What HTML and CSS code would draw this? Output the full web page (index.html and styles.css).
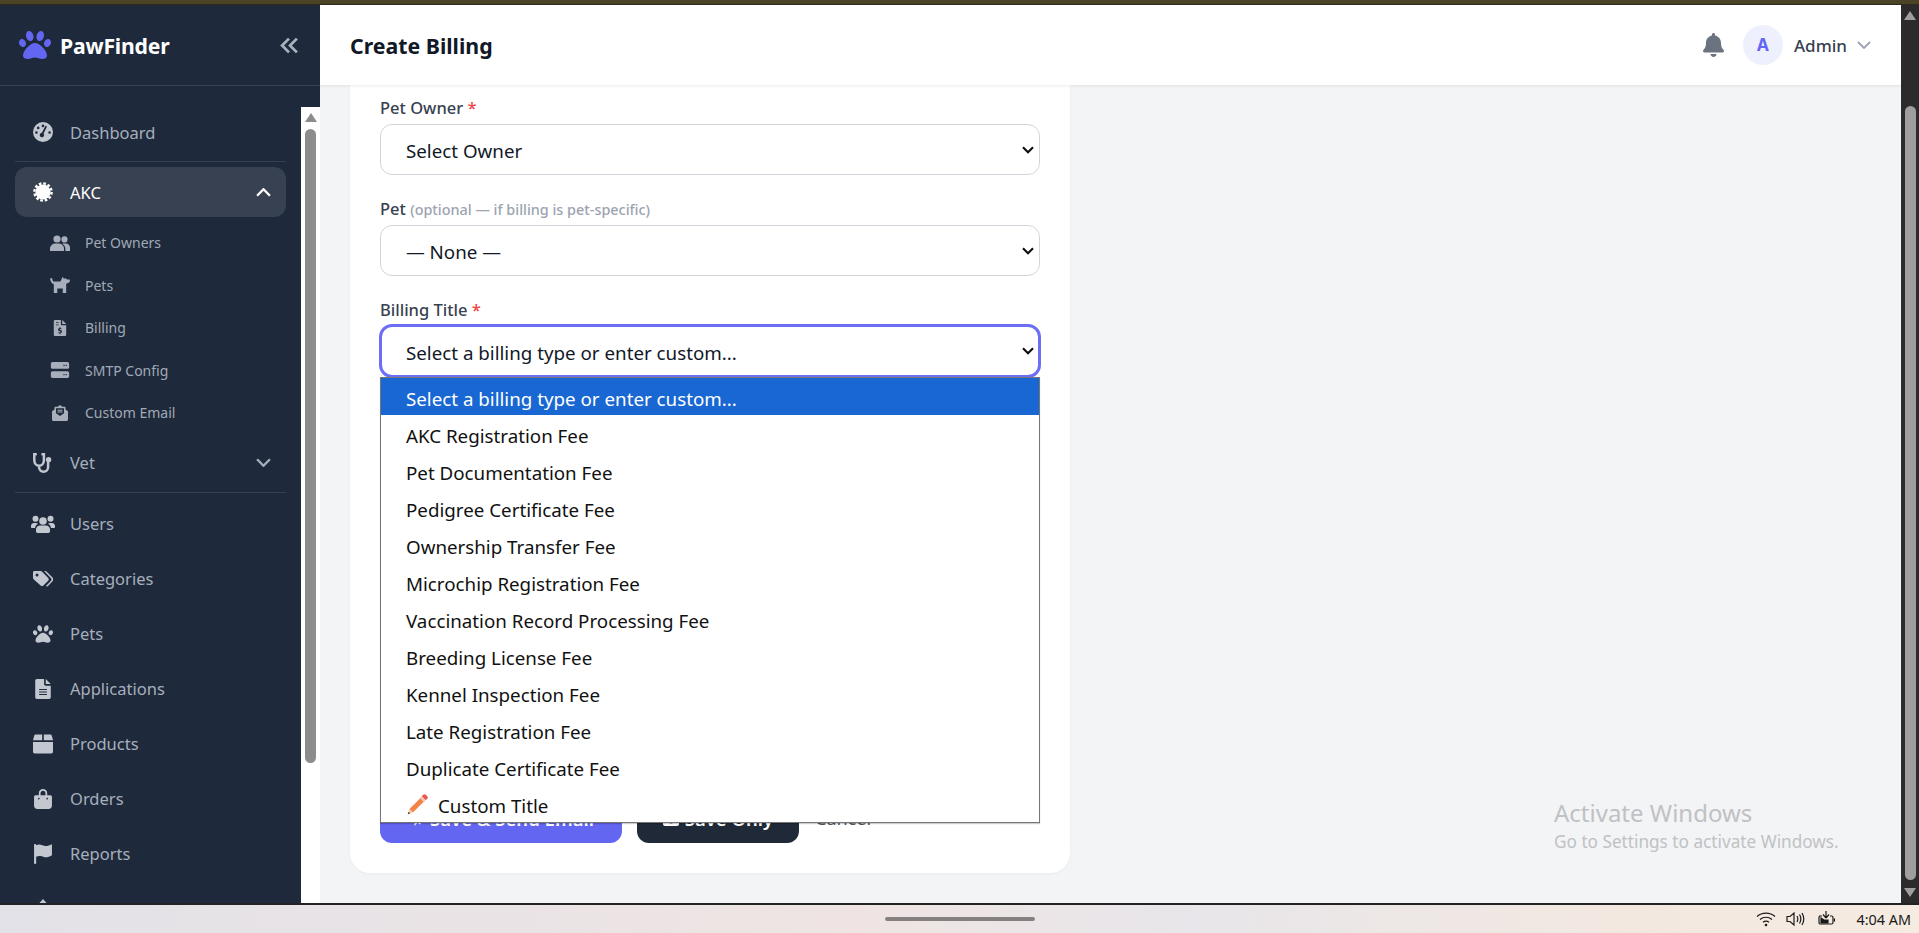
FILE: index.html
```html
<!DOCTYPE html>
<html lang="en">
<head>
    <meta charset="UTF-8">
    <meta name="viewport" content="width=device-width, initial-scale=1.0">
    <title>Create Billing - PawFinder</title>
    <link rel="stylesheet" href="styles.css">
</head>
<body>
    <svg class="icon-defs" aria-hidden="true">
        <symbol id="i-paw" viewBox="0 0 512 512"><path d="M256 224c-79.41 0-192 122.76-192 200.25 0 34.9 26.81 55.75 71.74 55.75 48.84 0 81.09-25.08 120.26-25.08 39.51 0 71.85 25.08 120.26 25.08 44.93 0 71.74-20.85 71.74-55.75C448 346.76 335.41 224 256 224zm-147.28-12.61c-10.4-34.65-42.44-57.09-71.56-50.13-29.12 6.96-44.29 40.69-33.89 75.34 10.4 34.65 42.44 57.09 71.56 50.13 29.12-6.96 44.29-40.69 33.89-75.34zm84.72-20.78c30.94-8.14 46.42-49.94 34.58-93.36s-46.52-72.01-77.46-63.87-46.42 49.94-34.58 93.36c11.84 43.42 46.52 72.01 77.46 63.87zm281.39-29.34c-29.12-6.96-61.15 15.48-71.56 50.13-10.4 34.65 4.77 68.38 33.89 75.34 29.12 6.96 61.15-15.48 71.56-50.13 10.4-34.65-4.77-68.38-33.89-75.34zm-156.27 29.34c30.94 8.14 65.62-20.45 77.46-63.87 11.84-43.42-3.64-85.21-34.58-93.36s-65.62 20.45-77.46 63.87c-11.84 43.42 3.64 85.22 34.58 93.36z"/></symbol>
        <symbol id="i-bell" viewBox="0 0 448 512"><path d="M224 512c35.32 0 63.97-28.65 63.97-64H160.03c0 35.35 28.65 64 63.97 64zm215.39-149.71c-19.32-20.76-55.47-51.99-55.47-154.29 0-77.7-54.48-139.9-127.94-155.16V32c0-17.67-14.32-32-31.98-32s-31.98 14.33-31.98 32v20.84C118.56 68.1 64.08 130.3 64.08 208c0 102.3-36.15 133.53-55.47 154.29-6 6.45-8.66 14.16-8.61 21.71.11 16.4 12.98 32 32.1 32h383.8c19.12 0 32-15.6 32.1-32 .05-7.55-2.61-15.26-8.61-21.71z"/></symbol>
        <symbol id="i-gauge" viewBox="0 0 20 20"><path fill-rule="evenodd" d="M10 0a10 10 0 1 1 0 20a10 10 0 0 1 0-20zM10 2.6a1.3 1.3 0 1 0 0 2.6a1.3 1.3 0 0 0 0-2.6zM5.2 4.6a1.3 1.3 0 1 0 0 2.6a1.3 1.3 0 0 0 0-2.6zM3.4 9.2a1.3 1.3 0 1 0 0 2.6a1.3 1.3 0 0 0 0-2.6zM16.6 9.2a1.3 1.3 0 1 0 0 2.6a1.3 1.3 0 0 0 0-2.6zM14 4.4l-3.4 7.2a2.2 2.2 0 1 1-1.7-.8l3.6-7z"/></symbol>
        <symbol id="i-cert" viewBox="0 0 20 20"><circle cx="10" cy="10" r="7.6"/><circle cx="10" cy="10" r="8.6" fill="none" stroke="currentColor" stroke-width="2.4" stroke-dasharray="2.7 1.8"/></symbol>
        <symbol id="i-friends" viewBox="0 0 20 16"><circle cx="7" cy="4" r="3.6"/><path d="M0 16v-2.2C0 10.8 2.8 8.6 5 8.6h4c2.2 0 5 2.2 5 5.2V16z"/><circle cx="14.5" cy="4.4" r="3.1"/><path d="M12.2 8.8c.6-.3 1.2-.4 1.8-.4h2c2.2 0 4 1.9 4 4.2V16h-4.6v-2.4c0-1.8-1.2-3.6-3.2-4.8z"/></symbol>
        <symbol id="i-dog" viewBox="0 0 20 16"><path d="M0 1.500l1.800-.6L3.200 4.500h7.300L12.400.2c.2-.3.6-.2.7.1l.5 1.200h2.700l.7 1h2.600l.4 1.200c-.3 1.500-1.400 2.400-3 2.500l-.8.8V16h-3.400v-4.500H7.300V16H3.800V7.200C1.800 6.600.4 4.500 0 1.500z"/></symbol>
        <symbol id="i-invoice" viewBox="0 0 14 18"><path fill-rule="evenodd" d="M1.500 0H8v4.500c0 .8.700 1.500 1.500 1.500H14v10.500c0 .8-.7 1.500-1.500 1.500h-11C.7 18 0 17.300 0 16.500v-15C0 .7.700 0 1.500 0zM9.500 0l4.500 4.500H9.500zM2.500 2.500v1h3v-1zM2.500 5v1h3V5zM6.500 8v1.100c-1.100.2-1.700.9-1.700 1.800 0 1 .8 1.500 1.800 1.800.8.200 1.100.4 1.100.8 0 .3-.3.500-.8.500-.5 0-1-.2-1.400-.4l-.5 1c.4.300.9.400 1.500.5V16h1v-1.100c1.100-.2 1.800-.9 1.800-1.900 0-1-.8-1.500-1.800-1.800-.8-.2-1.100-.4-1.100-.7 0-.3.200-.5.700-.5.400 0 .8.100 1.200.3l.4-1c-.4-.2-.8-.3-1.200-.4V8z"/></symbol>
        <symbol id="i-server" viewBox="0 0 16 14"><path fill-rule="evenodd" d="M1.500 0h13c.8 0 1.500.7 1.500 1.500v3c0 .8-.7 1.500-1.500 1.500h-13C.7 6 0 5.300 0 4.500v-3C0 .7.700 0 1.500 0zM11 2.500v1h1v-1zM13 2.500v1h1v-1zM1.500 8h13c.8 0 1.500.7 1.500 1.500v3c0 .8-.7 1.500-1.500 1.500h-13C.7 14 0 13.300 0 12.500v-3C0 8.700.7 8 1.500 8zM11 10.500v1h1v-1zM13 10.500v1h1v-1z"/></symbol>
        <symbol id="i-mail" viewBox="0 0 16 16"><path fill-rule="evenodd" d="M8 0l2.400 1.700h2.100c.6 0 1 .4 1 1v1.700L16 6.300V14.500c0 .8-.7 1.500-1.500 1.500h-13C.7 16 0 15.300 0 14.500V6.300l2.500-1.900V2.700c0-.6.4-1 1-1h2.100zM4 3.200v5l4 2.900 4-2.900v-5zM5.500 4.700h5v1h-5zM5.500 6.500h5v1h-5z"/></symbol>
        <symbol id="i-users" viewBox="0 0 24 18"><circle cx="4.500" cy="3.800" r="3"/><circle cx="19.500" cy="3.800" r="3"/><circle cx="12" cy="6" r="3.800"/><path d="M0 11c0-1.600 1.200-3 3-3h2c.8 0 1.400.2 2 .7-1.700 1-2.800 2.500-3 4.300H1c-.6 0-1-.4-1-1zM24 11c0-1.600-1.200-3-3-3h-2c-.8 0-1.400.2-2 .7 1.700 1 2.800 2.500 3 4.300h3c.6 0 1-.4 1-1zM9 10.500h6c2.200 0 4 1.800 4 3.800v2c0 .9-.8 1.700-1.700 1.700H6.700c-.9 0-1.700-.8-1.700-1.700v-2c0-2 1.800-3.800 4-3.800z"/></symbol>
        <symbol id="i-tags" viewBox="0 0 20 16"><path fill-rule="evenodd" d="M1.500 0h6c.5 0 1 .2 1.400.6l6.300 6.300c.8.800.8 2 0 2.800l-4.800 4.800c-.8.800-2 .8-2.800 0L.6 8.200C.2 7.800 0 7.300 0 6.800V1.500C0 .7.700 0 1.500 0zM4 2.500a1.500 1.500 0 1 0 0 3a1.500 1.500 0 0 0 0-3zM11 0h1.100c.5 0 1 .2 1.400.6l6 6c1 1 1 2.700 0 3.700l-4.700 4.900c-.5.500-1.100.5-1.500 0l-.3-.300 5-5.100c.7-.8.700-1.800 0-2.600z"/></symbol>
        <symbol id="i-file" viewBox="0 0 14 18"><path fill-rule="evenodd" d="M1.500 0H8v4.500c0 .8.700 1.500 1.500 1.500H14v10.500c0 .8-.7 1.500-1.500 1.500h-11C.7 18 0 17.300 0 16.500v-15C0 .7.700 0 1.500 0zM9.500 0l4.500 4.500H9.500zM3.500 9v1h7V9zM3.500 11.200v1h7v-1zM3.500 13.400v1h7v-1z"/></symbol>
        <symbol id="i-box" viewBox="0 0 17 16"><path d="M2.300 0H7.800v4.800H0L1 1C1.200.4 1.700 0 2.300 0zM9.200 0h5.500c.6 0 1.100.4 1.300 1l1 3.800H9.200zM0 6.200h17v8.300c0 .8-.7 1.500-1.500 1.500h-14C.7 16 0 15.300 0 14.500z"/></symbol>
        <symbol id="i-bag" viewBox="0 0 17 19"><path fill-rule="evenodd" d="M8.500 0c2.300 0 4 1.800 4 4v2h3c.8 0 1.500.6 1.500 1.400V16c0 1.700-1.300 3-3 3H3c-1.700 0-3-1.300-3-3V7.400C0 6.600.7 6 1.500 6h3V4c0-2.200 1.700-4 4-4zm0 1.700C7.200 1.700 6.200 2.700 6.200 4v2h4.600V4c0-1.300-1-2.300-2.300-2.300zM4.500 8.300a.8.8 0 1 0 0 1.600a.8.8 0 0 0 0-1.600zM12.500 8.300a.8.8 0 1 0 0 1.600a.8.8 0 0 0 0-1.600z"/></symbol>
        <symbol id="i-flag" viewBox="0 0 17 19"><path d="M0 1c0-.6.500-1 1-1s1 .4 1 1v.3C3.500.6 4.800.3 6.200.6c2.300.5 4 1.500 6.200 1.200 1.500-.2 3-.8 4.600-1.500v10.400c-1.600 1-3.100 1.700-4.800 1.900-2.300.2-4-.8-6.200-1.200-1.300-.2-2.700.1-4 .8V18c0 .6-.5 1-1 1s-1-.4-1-1z"/></symbol>
        <symbol id="i-stetho" viewBox="0 0 20 20"><path d="M2.800 1.300H1.300v6c0 3.200 2.200 5.500 4.800 5.500s4.800-2.300 4.800-5.500v-6H9.400M6.100 12.800v1.500c0 2.500 1.800 4.400 4.500 4.400 2.600 0 4.500-1.900 4.500-4.400V9.500" fill="none" stroke="currentColor" stroke-width="2.500" stroke-linecap="round"/><circle cx="15.600" cy="6.800" r="2.700"/></symbol>
        <symbol id="i-plane" viewBox="0 0 16 16"><path d="M16 0L0 9l4.500 2L13 3.500 6.500 12v4l2.700-3 3.300 1.500z"/></symbol>
        <symbol id="i-save" viewBox="0 0 16 16"><path fill-rule="evenodd" d="M2 0h10l4 4v10c0 1.100-.9 2-2 2H2c-1.100 0-2-.9-2-2V2C0 .9.900 0 2 0zM3 2.500V6h8V2.500zM8 8.500a2.500 2.500 0 1 0 0 5a2.500 2.500 0 0 0 0-5z"/></symbol>
    </svg>

    <div class="top-strip"></div>

    <div class="window">
        <aside class="sidebar">
            <div class="brand">
                <svg class="brand-paw"><use href="#i-paw"/></svg>
                <span class="brand-name">PawFinder</span>
                <svg class="brand-collapse" viewBox="0 0 18 16"><path d="M8.500 1.500L2 8l6.500 6.500M16 1.500L9.500 8l6.500 6.500"/></svg>
            </div>
            <div class="sidebar-body">
                <nav class="nav">
                    <a class="nav-item"><svg class="nav-icon"><use href="#i-gauge"/></svg>Dashboard</a>
                    <div class="nav-sep"></div>
                    <a class="nav-item active">
                        <svg class="nav-icon"><use href="#i-cert"/></svg>AKC
                        <svg class="nav-chevron" viewBox="0 0 14 8"><path d="M1 7l6-6 6 6"/></svg>
                    </a>
                    <div class="sub-list">
                        <a class="sub-item"><svg class="sub-icon"><use href="#i-friends"/></svg>Pet Owners</a>
                        <a class="sub-item"><svg class="sub-icon"><use href="#i-dog"/></svg>Pets</a>
                        <a class="sub-item"><svg class="sub-icon"><use href="#i-invoice"/></svg>Billing</a>
                        <a class="sub-item"><svg class="sub-icon"><use href="#i-server"/></svg>SMTP Config</a>
                        <a class="sub-item"><svg class="sub-icon"><use href="#i-mail"/></svg>Custom Email</a>
                    </div>
                    <a class="nav-item">
                        <svg class="nav-icon"><use href="#i-stetho"/></svg>Vet
                        <svg class="nav-chevron" viewBox="0 0 14 8"><path d="M1 1l6 6 6-6"/></svg>
                    </a>
                    <div class="nav-sep nav-sep-wide"></div>
                    <a class="nav-item"><svg class="nav-icon nav-icon-wide"><use href="#i-users"/></svg>Users</a>
                    <a class="nav-item"><svg class="nav-icon"><use href="#i-tags"/></svg>Categories</a>
                    <a class="nav-item"><svg class="nav-icon"><use href="#i-paw"/></svg>Pets</a>
                    <a class="nav-item"><svg class="nav-icon"><use href="#i-file"/></svg>Applications</a>
                    <a class="nav-item"><svg class="nav-icon"><use href="#i-box"/></svg>Products</a>
                    <a class="nav-item"><svg class="nav-icon"><use href="#i-bag"/></svg>Orders</a>
                    <a class="nav-item"><svg class="nav-icon"><use href="#i-flag"/></svg>Reports</a>
                    <a class="nav-item"><svg class="nav-icon" viewBox="0 0 20 20"><path d="M10 0l8 9H2z"/></svg></a>
                </nav>
                <div class="side-scroll">
                    <span class="arrow-up"></span>
                    <span class="side-thumb"></span>
                </div>
            </div>
        </aside>

        <main class="main">
            <header class="header">
                <h1 class="page-title">Create Billing</h1>
                <svg class="bell"><use href="#i-bell"/></svg>
                <span class="avatar">A</span>
                <span class="user-name">Admin</span>
                <svg class="user-chevron" viewBox="0 0 14 8"><path d="M1 1l6 6 6-6"/></svg>
            </header>
            <div class="content">
                <form class="card">
                    <div class="field">
                        <label class="field-label">Pet Owner <span class="req">*</span></label>
                        <select class="field-select"><option>Select Owner</option></select>
                    </div>
                    <div class="field">
                        <label class="field-label">Pet <small class="hint">(optional — if billing is pet-specific)</small></label>
                        <select class="field-select"><option>— None —</option></select>
                    </div>
                    <div class="field field-open">
                        <label class="field-label">Billing Title <span class="req">*</span></label>
                        <select class="field-select focused"><option>Select a billing type or enter custom...</option></select>
                        <ul class="dropdown">
                            <li class="selected">Select a billing type or enter custom...</li>
                            <li>AKC Registration Fee</li>
                            <li>Pet Documentation Fee</li>
                            <li>Pedigree Certificate Fee</li>
                            <li>Ownership Transfer Fee</li>
                            <li>Microchip Registration Fee</li>
                            <li>Vaccination Record Processing Fee</li>
                            <li>Breeding License Fee</li>
                            <li>Kennel Inspection Fee</li>
                            <li>Late Registration Fee</li>
                            <li>Duplicate Certificate Fee</li>
                            <li class="custom-option">
                                <svg class="pencil" viewBox="0 0 20 20">
                                    <path d="M13.500 3.500l3 3L6 17l-3-3z" fill="#f4834a"/>
                                    <path d="M15 1.500a1.600 1.600 0 0 1 2.200 0l1.300 1.300a1.600 1.600 0 0 1 0 2.200l-1.400 1.400-3.500-3.500z" fill="#e8594f"/>
                                    <path d="M13 3.200l3.800 3.800-1 1L12 4.200z" fill="#f3d0c4"/>
                                    <path d="M3 14l3 3-4.500 1.500z" fill="#f6c9a0"/>
                                    <path d="M2.200 16.300l1.500 1.500-2.200.7z" fill="#57413c"/>
                                </svg>
                                Custom Title
                            </li>
                        </ul>
                    </div>
                    <div class="covered-fields"></div>
                    <div class="actions">
                        <button type="button" class="btn btn-primary"><svg class="btn-icon"><use href="#i-plane"/></svg>Save &amp; Send Email</button>
                        <button type="button" class="btn btn-dark"><svg class="btn-icon"><use href="#i-save"/></svg>Save Only</button>
                        <a class="cancel">Cancel</a>
                    </div>
                </form>
            </div>
            <div class="watermark">
                <div class="watermark-title">Activate Windows</div>
                <div class="watermark-sub">Go to Settings to activate Windows.</div>
            </div>
        </main>

        <div class="page-scroll">
            <span class="arrow-up"></span>
            <span class="page-thumb"></span>
            <span class="arrow-down"></span>
        </div>
    </div>

    <footer class="taskbar">
        <span class="task-handle"></span>
        <div class="tray">
            <svg class="tray-icon" viewBox="0 0 20 16"><path d="M1 5.500c5-4.600 13-4.600 18 0M4 8.500c3.400-3 8.600-3 12 0M7 11.300c1.800-1.500 4.200-1.500 6 0"/><circle cx="10" cy="14" r="1.300" fill="#1a1a1a" stroke="none"/></svg>
            <svg class="tray-icon" viewBox="0 0 20 16"><path d="M1 5.500h3L8 2v12l-4-3.500H1zM11 5c1 1.800 1 4.200 0 6M13.500 3.500c1.600 2.700 1.600 6.300 0 9M16 2c2.200 3.700 2.200 8.300 0 12"/></svg>
            <svg class="tray-icon" viewBox="0 0 20 16"><path d="M3 5h3v0M14 5h1.500c.8 0 1.500.7 1.500 1.500v5c0 .8-.7 1.500-1.500 1.500h-11C3.700 13 3 12.300 3 11.500v-5C3 5.700 3.700 5 4.500 5M18.500 7.500v3"/><path d="M10 0v6M10 7l-3-3.500M10 7l3-3.500M5 7l3 2h4v3H5z" fill="#1a1a1a"/></svg>
            <span class="tray-time">4:04 AM</span>
        </div>
    </footer>
</body>
</html>
```

FILE: styles.css
```css
* {
    box-sizing: border-box;
}

html, body {
    margin: 0;
    padding: 0;
    height: 100%;
    overflow: hidden;
}

body {
    font-family: "Noto Sans", "Open Sans", Arial, sans-serif;
    background-color: #f3f4f6;
    color: #111827;
}

.icon-defs {
    display: none;
}

svg {
    fill: currentColor;
}

.top-strip {
    height: 5px;
    background: linear-gradient(#4a4325 80%, #14140f);
}

.window {
    display: flex;
    height: 898px;
}

/* sidebar */
.sidebar {
    width: 320px;
    flex-shrink: 0;
    display: flex;
    flex-direction: column;
    background-color: #1e293b;
    overflow: hidden;
}

.brand {
    height: 81px;
    flex-shrink: 0;
    display: flex;
    align-items: center;
    padding: 0 21px 0 19px;
    border-bottom: 1px solid #334155;
}

.brand-paw {
    width: 32px;
    height: 32px;
    color: #6366f1;
}

.brand-name {
    margin-left: 9px;
    font-size: 21.2px;
    font-weight: 700;
    color: #fff;
    letter-spacing: -0.2px;
}

.brand-collapse {
    margin-left: auto;
    width: 19px;
    height: 17px;
    fill: none;
    stroke: #aab2c0;
    stroke-width: 2.6;
}

.sidebar-body {
    flex: 1;
    display: flex;
    min-height: 0;
}

.nav {
    flex: 1;
    padding: 21px 15px 0;
    overflow: hidden;
}

.nav-item {
    height: 50px;
    margin-bottom: 5px;
    padding: 0 18px;
    display: flex;
    align-items: center;
    border-radius: 12px;
    font-size: 16.5px;
    color: #a7afbc;
}

.nav-item.active {
    margin-bottom: 0;
    background-color: #374151;
    color: #fff;
}

.nav-icon {
    width: 20px;
    height: 20px;
    margin-right: 17px;
    flex-shrink: 0;
    color: #c2c7d0;
}

.nav-icon-wide {
    width: 24px;
    margin-left: -2px;
    margin-right: 15px;
}

.nav-item.active .nav-icon {
    color: #fff;
}

.nav-chevron {
    margin-left: auto;
    margin-right: -3px;
    width: 15px;
    height: 9px;
    fill: none;
    stroke: currentColor;
    stroke-width: 2.2;
}

.nav-sep {
    height: 1px;
    margin: -1px 0 5px;
    background-color: #334155;
}

.nav-sep-wide {
    margin: -1px 0 6px;
}

.sub-list {
    margin-top: 4px;
    margin-bottom: 4px;
}

.sub-item {
    height: 42.5px;
    padding: 1px 0 0 35px;
    display: flex;
    align-items: center;
    font-size: 14px;
    color: #a1a9b6;
}

.sub-icon {
    width: 20px;
    height: 16px;
    margin-right: 15px;
    flex-shrink: 0;
    color: #a8afbb;
}

.side-scroll {
    width: 19px;
    margin-top: 21px;
    flex-shrink: 0;
    background-color: #fff;
    padding: 6px 4px 0;
    display: flex;
    flex-direction: column;
    align-items: center;
}

.side-thumb {
    width: 11px;
    height: 634px;
    margin-top: 7px;
    border-radius: 6px;
    background-color: #8c8c8c;
}

.side-scroll .arrow-up {
    border-bottom-color: #8c8c8c;
}

.arrow-up,
.arrow-down {
    width: 0;
    height: 0;
    border-left: 6px solid transparent;
    border-right: 6px solid transparent;
}

.arrow-up {
    border-bottom: 9px solid #9e9e9e;
}

.arrow-down {
    border-top: 9px solid #9e9e9e;
}

/* main area */
.main {
    flex: 1;
    min-width: 0;
    position: relative;
    display: flex;
    flex-direction: column;
    overflow: hidden;
}

.header {
    height: 80px;
    flex-shrink: 0;
    display: flex;
    align-items: center;
    padding: 0 30px;
    background-color: #fff;
    box-shadow: 0 1px 3px rgba(0, 0, 0, 0.08);
    position: relative;
    z-index: 1;
}

.page-title {
    margin: 0 auto 0 0;
    font-size: 21.3px;
    font-weight: 700;
    color: #111827;
}

.bell {
    width: 21px;
    height: 24px;
    color: #6b7280;
}

.avatar {
    width: 40px;
    height: 40px;
    margin-left: 19px;
    border-radius: 50%;
    background-color: #eef0fe;
    color: #6366f1;
    font-family: Inter, sans-serif;
    font-size: 17px;
    font-weight: 700;
    display: flex;
    align-items: center;
    justify-content: center;
}

.user-name {
    margin-left: 11px;
    font-size: 17px;
    font-weight: 500;
    color: #374151;
}

.user-chevron {
    width: 14px;
    height: 8px;
    margin-left: 10px;
    fill: none;
    stroke: #9ca3af;
    stroke-width: 1.8;
}

.content {
    flex: 1;
    padding-left: 30px;
    overflow: hidden;
}

.card {
    width: 720px;
    height: 788px;
    padding: 12px 30px 0;
    background-color: #fff;
    border-radius: 0 0 20px 20px;
    box-shadow: 0 1px 3px rgba(0, 0, 0, 0.04);
}

.field {
    margin-bottom: 23px;
}

.field-open {
    position: relative;
    margin-bottom: 0;
}

.field-label {
    display: block;
    height: 27px;
    line-height: 22px;
    font-size: 16.5px;
    font-weight: 500;
    color: #374151;
}

.req {
    color: #ef4444;
}

.hint {
    font-size: 14.4px;
    font-weight: 500;
    color: #9ca3af;
}

.field-select {
    display: block;
    width: 100%;
    height: 51px;
    padding: 2px 34px 0 25px;
    background: #fff url("data:image/svg+xml,%3Csvg xmlns='http://www.w3.org/2000/svg' viewBox='0 0 12 8'%3E%3Cpath d='M1 1.200l5 5 5-5' fill='none' stroke='%23111' stroke-width='2.200'/%3E%3C/svg%3E") no-repeat right 5px center / 12px 8px;
    border: 1px solid #d1d5db;
    border-radius: 12px;
    font-family: inherit;
    font-size: 18.75px;
    color: #111827;
    appearance: none;
    -webkit-appearance: none;
}

.field-select.focused {
    height: 52px;
    margin-top: -1px;
    border-color: #6c6ef5;
    outline: 3px solid #6c6ef5;
    outline-offset: -2px;
}

/* open list of the focused select */
.dropdown {
    position: absolute;
    left: 0;
    right: 0;
    top: 78px;
    z-index: 2;
    margin: 0;
    padding: 0;
    list-style: none;
    background-color: #fff;
    border: 1px solid #767676;
    box-shadow: 0 1px 1px rgba(0, 0, 0, 0.2);
}

.dropdown li {
    height: 37px;
    padding: 3px 0 0 25px;
    display: flex;
    align-items: center;
    font-size: 18.75px;
    color: #111;
}

.dropdown li.selected {
    background-color: #1967d2;
    color: #fff;
}

.custom-option .pencil {
    width: 23px;
    height: 23px;
    margin: -2px 9px 0 0;
    flex-shrink: 0;
}

.covered-fields {
    height: 416px;
}

.actions {
    display: flex;
    align-items: center;
    gap: 15px;
}

.btn {
    height: 50px;
    border: none;
    border-radius: 12px;
    font-family: inherit;
    font-size: 18.5px;
    font-weight: 600;
    color: #fff;
    display: flex;
    align-items: center;
    justify-content: center;
}

.btn-icon {
    width: 16px;
    height: 16px;
    margin-right: 6px;
    flex-shrink: 0;
}

.btn-primary {
    width: 242px;
    background-color: #6366f1;
}

.btn-dark {
    width: 162px;
    background-color: #1f2937;
}

.cancel {
    margin-left: 1px;
    font-size: 18px;
    color: #4b5563;
}

.watermark {
    position: absolute;
    left: 1234px;
    top: 792px;
    color: #c0c1c4;
}

.watermark-title {
    font-size: 24px;
    line-height: 32px;
}

.watermark-sub {
    font-size: 17.2px;
    line-height: 26px;
}

.page-scroll {
    width: 18px;
    flex-shrink: 0;
    padding: 6px 0;
    background-color: #2b2b2b;
    display: flex;
    flex-direction: column;
    align-items: center;
}

.page-thumb {
    width: 11px;
    flex: 1;
    margin: 86px 0 8px;
    border-radius: 6px;
    background-color: #9e9e9e;
}

/* taskbar */
.taskbar {
    height: 30px;
    position: relative;
    display: flex;
    align-items: center;
    justify-content: center;
    border-top: 2px solid #232323;
    background: linear-gradient(90deg, #e3e2e8 0%, #efe4e3 45%, #e8e6ea 62%, #f3e8e0 85%, #f6ebe1 100%);
}

.task-handle {
    width: 150px;
    height: 4px;
    border-radius: 2px;
    background-color: #858080;
}

.tray {
    position: absolute;
    right: 8px;
    top: 0;
    bottom: 0;
    display: flex;
    align-items: center;
    gap: 10px;
}

.tray-icon {
    width: 20px;
    height: 16px;
    fill: none;
    stroke: #1a1a1a;
    stroke-width: 1.2;
}

.tray-time {
    margin-left: 10px;
    font-size: 14.4px;
    color: #1a1a1a;
}
```
